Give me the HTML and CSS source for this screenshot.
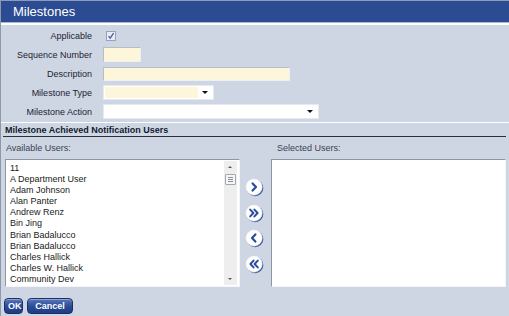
FILE: index.html
```html
<!DOCTYPE html>
<html>
<head>
<meta charset="utf-8">
<link rel="stylesheet" href="styles.css">
</head>
<body>
<div class="page">
  <div class="title">Milestones</div>
  <div class="form">
    <div class="row">
      <div class="label">Applicable</div>
      <div class="control">
        <span class="checkbox">
          <svg width="10" height="10" viewBox="0 0 10 10"><path d="M2.6 5.2 L4.2 7.2 L7.6 2.2" fill="none" stroke="#3b5fb0" stroke-width="1.3"/></svg>
        </span>
      </div>
    </div>
    <div class="row">
      <div class="label">Sequence Number</div>
      <div class="control"><span class="input yellow seq"></span></div>
    </div>
    <div class="row">
      <div class="label">Description</div>
      <div class="control"><span class="input yellow desc"></span></div>
    </div>
    <div class="row">
      <div class="label">Milestone Type</div>
      <div class="control">
        <span class="select type"><span class="fill"></span><span class="arrow"></span></span>
      </div>
    </div>
    <div class="row">
      <div class="label">Milestone Action</div>
      <div class="control">
        <span class="select action"><span class="fill white"></span><span class="arrow"></span></span>
      </div>
    </div>
  </div>
  <div class="section">
    <div class="section-head">Milestone Achieved Notification Users</div>
    <div class="captions">
      <div class="cap-left">Available Users:</div>
      <div class="cap-right">Selected Users:</div>
    </div>
    <div class="lists">
      <div class="listbox left">
        <div class="items">
          <div>11</div>
          <div>A Department User</div>
          <div>Adam Johnson</div>
          <div>Alan Panter</div>
          <div>Andrew Renz</div>
          <div>Bin Jing</div>
          <div>Brian Badalucco</div>
          <div>Brian Badalucco</div>
          <div>Charles Hallick</div>
          <div>Charles W. Hallick</div>
          <div>Community Dev</div>
        </div>
        <div class="scrollbar">
          <span class="sb-up"></span>
          <span class="sb-thumb"><i></i><i></i><i></i></span>
          <span class="sb-track"></span>
          <span class="sb-down"></span>
        </div>
      </div>
      <div class="movers">
        <span class="mover">
          <svg width="19" height="19" viewBox="0 0 19 19"><circle cx="10" cy="10" r="8.3" fill="#2b4c9e"/><circle cx="9" cy="9" r="8.3" fill="#ffffff" stroke="#d4d9e3" stroke-width="0.6"/><path d="M7.6 5.4 L11 9 L7.6 12.6" fill="none" stroke="#2b4c9e" stroke-width="2.2" stroke-linecap="round" stroke-linejoin="round"/></svg>
        </span>
        <span class="mover">
          <svg width="19" height="19" viewBox="0 0 19 19"><circle cx="10" cy="10" r="8.3" fill="#2b4c9e"/><circle cx="9" cy="9" r="8.3" fill="#ffffff" stroke="#d4d9e3" stroke-width="0.6"/><path d="M5.2 5.6 L8.4 9 L5.2 12.4 M9.4 5.6 L12.6 9 L9.4 12.4" fill="none" stroke="#2b4c9e" stroke-width="2" stroke-linecap="round" stroke-linejoin="round"/></svg>
        </span>
        <span class="mover">
          <svg width="19" height="19" viewBox="0 0 19 19"><circle cx="10" cy="10" r="8.3" fill="#2b4c9e"/><circle cx="9" cy="9" r="8.3" fill="#ffffff" stroke="#d4d9e3" stroke-width="0.6"/><path d="M10.4 5.4 L7 9 L10.4 12.6" fill="none" stroke="#2b4c9e" stroke-width="2.2" stroke-linecap="round" stroke-linejoin="round"/></svg>
        </span>
        <span class="mover">
          <svg width="19" height="19" viewBox="0 0 19 19"><circle cx="10" cy="10" r="8.3" fill="#2b4c9e"/><circle cx="9" cy="9" r="8.3" fill="#ffffff" stroke="#d4d9e3" stroke-width="0.6"/><path d="M8.6 5.6 L5.4 9 L8.6 12.4 M12.8 5.6 L9.6 9 L12.8 12.4" fill="none" stroke="#2b4c9e" stroke-width="2" stroke-linecap="round" stroke-linejoin="round"/></svg>
        </span>
      </div>
      <div class="listbox right"></div>
    </div>
  </div>
  <div class="actions">
    <span class="btn ok">OK</span>
    <span class="btn cancel">Cancel</span>
  </div>
</div>
</body>
</html>
```
FILE: styles.css
```css
html, body {
  margin: 0;
  padding: 0;
}
body {
  width: 509px;
  height: 316px;
  overflow: hidden;
  background: #cfd6e3;
  font-family: "Liberation Sans", Arial, sans-serif;
  font-size: 9px;
  color: #1c2233;
}
.page {
  height: 316px;
  border-left: 1px solid #8f98ab;
  box-sizing: border-box;
}
.title {
  height: 21px;
  line-height: 21px;
  background: #2b4b93;
  border-top: 1px solid #8e9ab6;
  border-bottom: 1px solid #aeb8cc;
  box-shadow: 0 2px 0 #ffffff;
  color: #ffffff;
  font-size: 13px;
  padding-left: 12px;
}
.form {
  margin-top: 3px;
}
.row {
  display: flex;
  align-items: center;
  height: 19px;
}
.label {
  width: 91px;
  text-align: right;
  flex: none;
}
.control {
  margin-left: 11px;
  display: flex;
  align-items: center;
}
.checkbox {
  display: block;
  width: 8px;
  height: 8px;
  margin-left: 3px;
  border: 1px solid #9aa3b4;
  background: #e9edf3;
  position: relative;
}
.checkbox svg {
  position: absolute;
  left: -1px;
  top: -1px;
}
.input {
  display: block;
  box-sizing: border-box;
  height: 15px;
  border: 1px solid;
  border-color: #b6bdc9 #eef0f4 #eef0f4 #b6bdc9;
}
.yellow {
  background: #fef6da;
}
.seq {
  width: 38px;
}
.desc {
  width: 187px;
  height: 14px;
}
.select {
  display: flex;
  box-sizing: border-box;
  height: 15px;
  background: #ffffff;
  border: 1px solid #e6e9ef;
  padding: 1px;
}
.select .fill {
  flex: 1;
  background: #fef6da;
}
.select .fill.white {
  background: #ffffff;
}
.select .arrow {
  width: 14px;
  position: relative;
}
.select .arrow::after {
  content: "";
  position: absolute;
  left: 4px;
  top: 4px;
  border-left: 3px solid transparent;
  border-right: 3px solid transparent;
  border-top: 3px solid #111111;
}
.type {
  width: 111px;
}
.action {
  width: 216px;
}
.section {
  margin-top: 1px;
  border-top: 1px solid #ffffff;
}
.section-head {
  margin: 0 3px 0 2px;
  padding-left: 2px;
  height: 12px;
  line-height: 12px;
  padding-top: 1px;
  font-weight: bold;
  border-bottom: 1px solid #2a2f3a;
  color: #111a2e;
}
.captions {
  display: flex;
  height: 22px;
  line-height: 22px;
  color: #3a4154;
}
.cap-left {
  width: 266px;
  padding-left: 5px;
}
.cap-right {
  padding-left: 5px;
}
.lists {
  display: flex;
  padding-left: 4px;
}
.listbox {
  box-sizing: border-box;
  height: 128px;
  background: #ffffff;
  border: 1px solid;
  border-color: #8f96a3 #f4f5f8 #f4f5f8 #8f96a3;
}
.listbox.left {
  width: 235px;
  display: flex;
  padding: 1px;
}
.listbox.right {
  width: 235px;
}
.items {
  flex: 1;
  padding: 2px 0 0 3px;
  line-height: 11.1px;
  color: #1a1a1a;
}
.scrollbar {
  width: 13px;
  background: #eeeeee;
  display: flex;
  flex-direction: column;
  margin-right: 1px;
}
.sb-up, .sb-down {
  height: 11px;
  position: relative;
}
.sb-up::after {
  content: "";
  position: absolute;
  left: 4px;
  top: 5px;
  border-left: 2px solid transparent;
  border-right: 2px solid transparent;
  border-bottom: 2px solid #555555;
}
.sb-down::after {
  content: "";
  position: absolute;
  left: 4px;
  top: 4px;
  border-left: 2px solid transparent;
  border-right: 2px solid transparent;
  border-top: 2px solid #555555;
}
.sb-thumb {
  height: 9px;
  margin: 2px 1px 0 1px;
  border: 1px solid #a3a8b0;
  border-radius: 1px;
  background: #f6f6f6;
  display: flex;
  flex-direction: column;
  justify-content: center;
  gap: 1px;
  padding: 0 2px;
}
.sb-thumb i {
  display: block;
  height: 1px;
  background: #8a8f98;
}
.sb-track {
  flex: 1;
}
.movers {
  width: 31px;
  display: flex;
  flex-direction: column;
  padding-top: 19px;
  padding-left: 5px;
  box-sizing: border-box;
  gap: 6.6px;
}
.mover {
  display: block;
  width: 19px;
  height: 19px;
}
.mover svg {
  display: block;
}
.actions {
  display: flex;
  gap: 4px;
  padding: 11px 0 0 3px;
}
.btn {
  display: block;
  height: 14px;
  line-height: 14px;
  padding: 0 3px;
  border: 1px solid #1b2f68;
  border-radius: 4px;
  background: linear-gradient(#5876bb, #2a4a94 55%, #1f3c82);
  box-shadow: inset 0 1px 0 #8ea4d4;
  color: #ffffff;
  font-weight: bold;
  font-size: 9px;
  text-align: center;
}
.ok {
  width: 11px;
}
.cancel {
  width: 38px;
}
```
